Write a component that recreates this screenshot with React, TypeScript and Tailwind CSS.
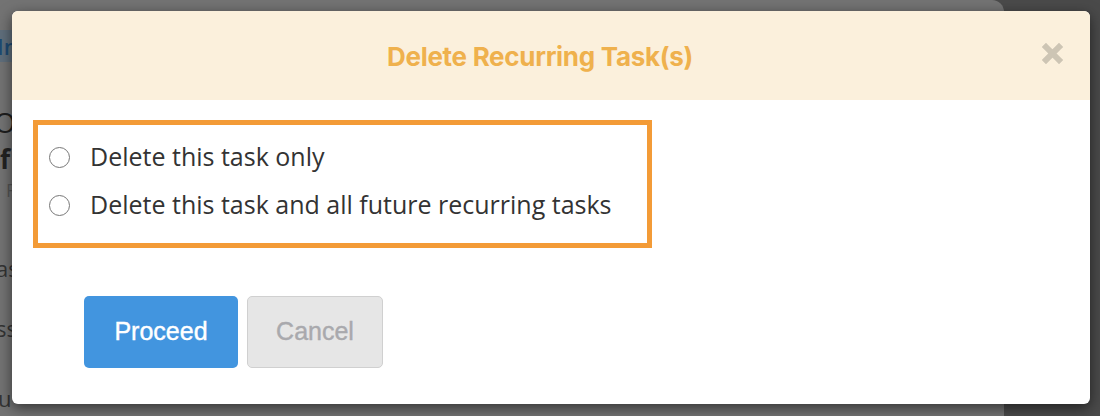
import React from "react";

export default function App() {
  return (
    <div className="relative w-[1100px] h-[416px] overflow-hidden bg-[#4a4a4a]">
      {/* dimmed page behind the modal */}
      <div className="w-[1004px] h-full bg-[#737373] rounded-tr-[12px] flex flex-col text-[#262626] font-['Open_Sans',sans-serif]">
        <div className="mt-[30px] h-[32px] w-[40px] bg-[#5f6e7b] flex items-center">
          <span className="ml-[-3px] text-[22px] font-semibold text-[#1d4a73]">In</span>
        </div>
        <div className="mt-[44px] ml-[-6px] text-[28px] leading-[32px] text-[#1e1e1e]">O</div>
        <div className="mt-[6px] ml-[0px] text-[26px] leading-[30px] font-bold text-[#222]">f</div>
        <div className="mt-[4px] ml-[6px] text-[18px] leading-[24px] text-[#555]">F</div>
        <div className="mt-[52px] ml-[-4px] text-[22px] leading-[28px] text-[#333]">as</div>
        <div className="mt-[32px] ml-[-4px] text-[22px] leading-[28px] text-[#333]">ss</div>
        <div className="mt-[42px] ml-[-2px] text-[22px] leading-[28px] text-[#333]">u</div>
      </div>

      {/* modal */}
      <div className="absolute left-[12px] top-[11px] w-[1078px] h-[393px] rounded-[6px] bg-white overflow-hidden shadow-[0_4px_14px_rgba(0,0,0,0.55)]">
        <div className="relative h-[89px] bg-[#fbf0dc] flex items-center justify-center">
          <h2 className="mt-[2px] mr-[22px] text-[26px] leading-[32px] font-bold text-[#efb14d] font-['Inter',sans-serif] tracking-[-0.3px]">
            Delete Recurring Task(s)
          </h2>
          <button className="absolute left-[1030px] top-[32px] w-[21px] h-[21px]" aria-label="Close">
            <svg viewBox="0 0 21 21" width="21" height="21">
              <path d="M4 4 L17 17 M17 4 L4 17" stroke="#cdc5b4" strokeWidth="6" strokeLinecap="square" fill="none" />
            </svg>
          </button>
        </div>

        <div className="pt-[20px] pl-[21px]">
          <div className="w-[619px] h-[128px] border-[5px] border-[#f39b37] pt-[8px] pl-[11px] font-['Open_Sans',sans-serif] text-[#333] text-[25px]">
            <label className="h-[48px] flex items-center">
              <span className="w-[21px] h-[21px] rounded-full border-[1.5px] border-[#777] bg-white" />
              <span className="ml-[20px]">Delete this task only</span>
            </label>
            <label className="h-[48px] flex items-center">
              <span className="w-[21px] h-[21px] rounded-full border-[1.5px] border-[#777] bg-white" />
              <span className="ml-[20px]">Delete this task and all future recurring tasks</span>
            </label>
          </div>
        </div>

        <div className="mt-[48px] pl-[72px] flex gap-[9px] font-['Liberation_Sans',sans-serif] text-[25px]">
          <button className="w-[154px] h-[72px] rounded-[5px] bg-[#4295df] text-white [-webkit-text-stroke:0.4px_white]">Proceed</button>
          <button className="w-[136px] h-[72px] rounded-[5px] bg-[#e6e6e6] border border-[#d0d0d0] text-[#a9a9ad] [-webkit-text-stroke:0.4px_#a9a9ad]">Cancel</button>
        </div>
      </div>
    </div>
  );
}
